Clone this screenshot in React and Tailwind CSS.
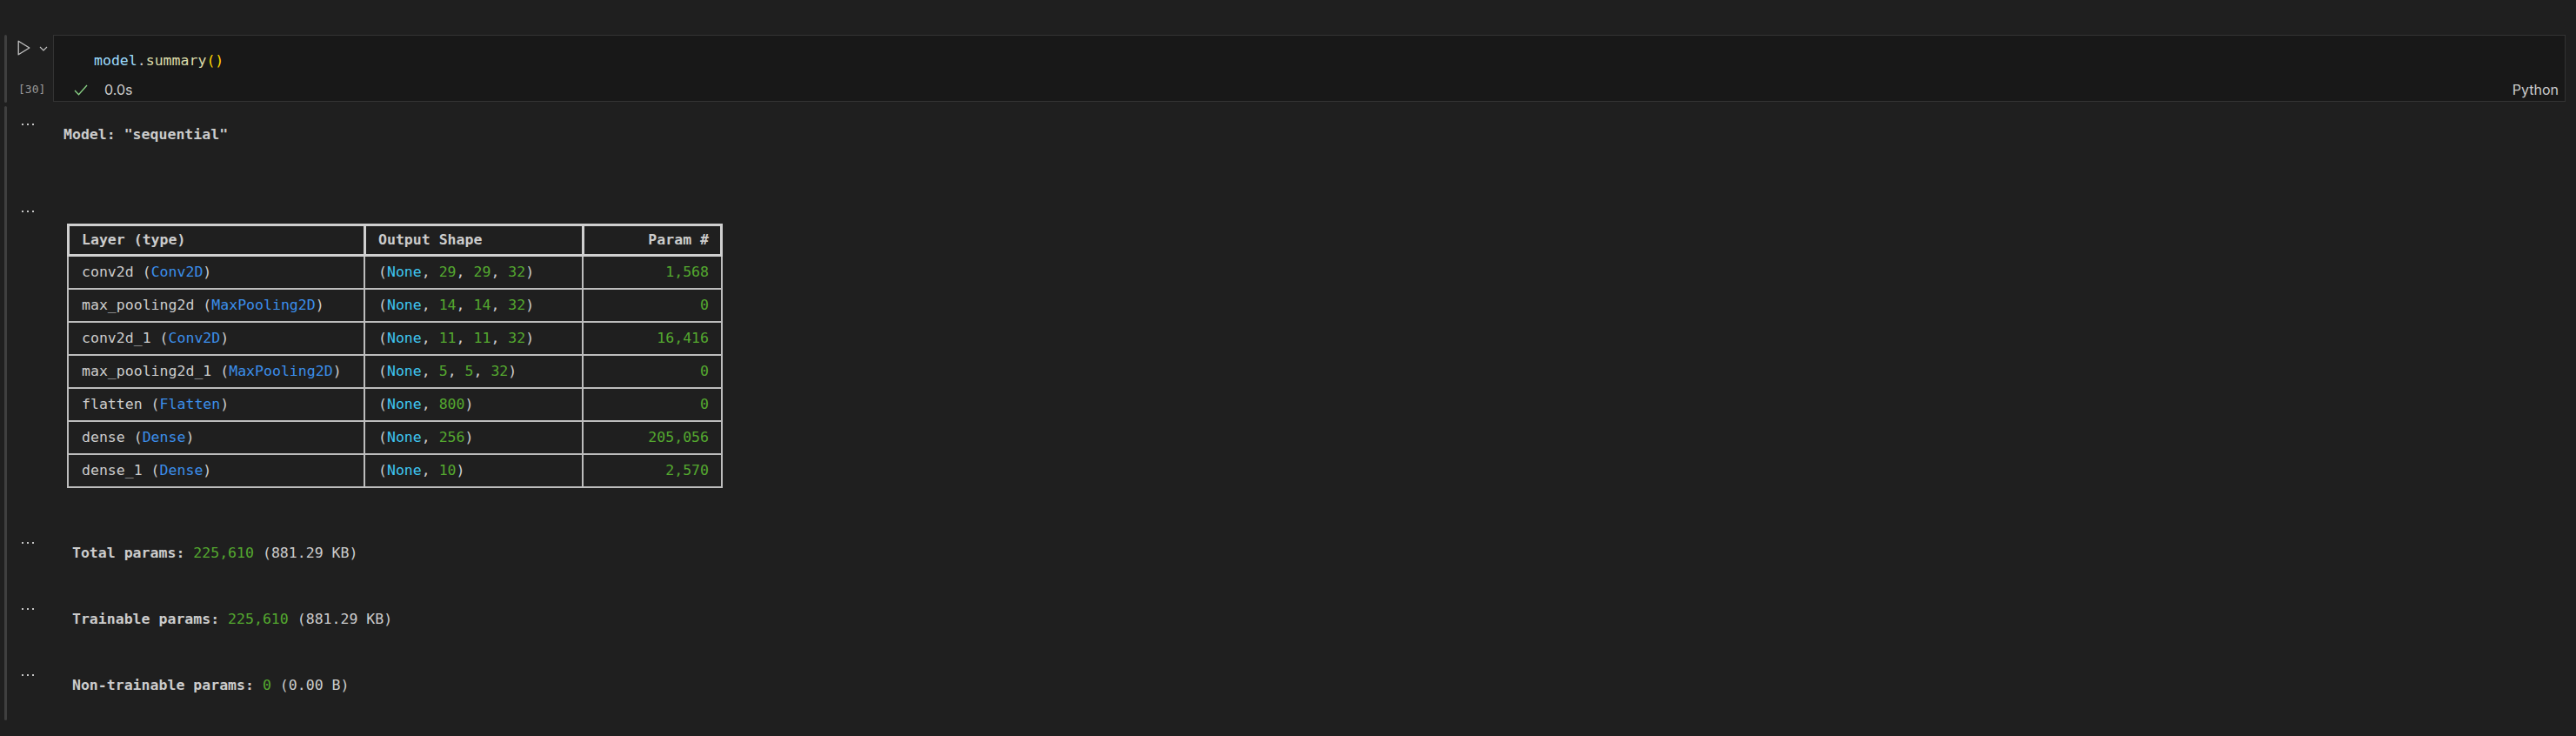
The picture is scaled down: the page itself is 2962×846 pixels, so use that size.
const mono = { fontFamily: '"DejaVu Sans Mono", "Liberation Mono", monospace' };

const layers = [
  { name: "conv2d", type: "Conv2D", shape: ["29", "29", "32"], params: "1,568" },
  { name: "max_pooling2d", type: "MaxPooling2D", shape: ["14", "14", "32"], params: "0" },
  { name: "conv2d_1", type: "Conv2D", shape: ["11", "11", "32"], params: "16,416" },
  { name: "max_pooling2d_1", type: "MaxPooling2D", shape: ["5", "5", "32"], params: "0" },
  { name: "flatten", type: "Flatten", shape: ["800"], params: "0" },
  { name: "dense", type: "Dense", shape: ["256"], params: "205,056" },
  { name: "dense_1", type: "Dense", shape: ["10"], params: "2,570" },
];

const Dots = () => (
  <svg width="16" height="4" viewBox="0 0 16 4" className="block">
    <rect x="1" y="1" width="2" height="2" fill="#c5c5c5" />
    <rect x="7" y="1" width="2" height="2" fill="#c5c5c5" />
    <rect x="13" y="1" width="2" height="2" fill="#c5c5c5" />
  </svg>
);

const OutputItem = ({ children, contentClass }) => (
  <div className="flex">
    <div className="w-[65px] shrink-0 pl-[16px] pt-[10px]">
      <Dots />
    </div>
    <div className={contentClass}>{children}</div>
  </div>
);

const Shape = ({ dims }) => (
  <span>
    (<span className="text-[#3ec5ef]">None</span>
    {dims.map((d, i) => (
      <span key={i}>
        , <span className="text-[#54a82f]">{d}</span>
      </span>
    ))}
    )
  </span>
);

const ParamLine = ({ label, value, size }) => (
  <div className="leading-[24px] whitespace-pre">
    <span className="font-bold"> {label}: </span>
    <span className="text-[#54a82f]">{value}</span>
    <span> ({size})</span>
  </div>
);

const App = () => {
  return (
    <div className="w-[2962px] h-[846px] bg-[#1f1f1f] pt-[40px] text-[#cccccc] overflow-hidden">
      {/* input cell */}
      <div className="flex h-[78px]">
        <div className="ml-[5px] w-[3px] bg-[#3f3f3f] rounded-full" />
        <div className="w-[53px] shrink-0 flex flex-col">
          <div className="flex items-start pt-[6px] pl-[12px]">
            <svg width="15" height="18" viewBox="0 0 15 18" className="block">
              <path d="M1.2 1.2 L13.8 9 L1.2 16.8 Z" fill="none" stroke="#c5c5c5" strokeWidth="1.3" strokeLinejoin="round" />
            </svg>
            <svg width="10" height="6" viewBox="0 0 10 6" className="block ml-[10px] mt-[7px]">
              <path d="M1 1 L5 5 L9 1" fill="none" stroke="#c5c5c5" strokeWidth="1.1" />
            </svg>
          </div>
          <div className="pl-[13px] mt-[31px] text-[13px] leading-[16px] text-[#9a9a9a]" style={mono}>
            [30]
          </div>
        </div>
        <div className="flex-1 mr-[12px] h-[77px] bg-[#181818] border border-[#333333] flex flex-col">
          <div className="pl-[46px] pt-[17px] text-[16.55px] leading-[24px]" style={mono}>
            <span className="text-[#9cdcfe]">model</span>
            <span className="text-[#cccccc]">.</span>
            <span className="text-[#dcdcaa]">summary</span>
            <span className="text-[#ffd700]">()</span>
          </div>
          <div className="flex items-center h-[24px] mt-[9px] pl-[23px] pr-[7px] font-['Inter',sans-serif] text-[16px]">
            <svg width="16" height="13" viewBox="0 0 16 13" className="block">
              <path d="M1 7 L5.5 11.8 L15 1" fill="none" stroke="#89d185" strokeWidth="1.3" />
            </svg>
            <span className="ml-[19px]">0.0s</span>
            <span className="ml-auto">Python</span>
          </div>
        </div>
      </div>

      {/* outputs */}
      <div className="flex mt-[4px] h-[706px]">
        <div className="ml-[5px] w-[3px] bg-[#3f3f3f] rounded-full" />
        <div className="flex flex-col pt-[9px] text-[16.55px]" style={mono}>
          <OutputItem contentClass="pt-[12px] pb-[64px] leading-[24px] font-bold whitespace-pre">
            Model: "sequential"
          </OutputItem>

          <OutputItem contentClass="pt-[26px] pb-[51px]">
            <div className="w-[754px] ml-[4px]">
              <div className="flex h-[38px] border-[3px] border-[#cfcfcf] font-bold">
                <div className="w-[341px] border-r-[3px] border-[#cfcfcf] pl-[14px] flex items-center">Layer (type)</div>
                <div className="w-[251px] border-r-[3px] border-[#cfcfcf] pl-[14px] flex items-center">Output Shape</div>
                <div className="flex-1 pr-[13px] flex items-center justify-end">Param #</div>
              </div>
              {layers.map((l) => (
                <div key={l.name} className="flex h-[38px] border-l-2 border-b-2 border-[#bdbdbd]">
                  <div className="w-[341px] border-r-2 border-[#bdbdbd] pl-[15px] flex items-center whitespace-pre">
                    {l.name} (<span className="text-[#3b8eea]">{l.type}</span>)
                  </div>
                  <div className="w-[251px] border-r-2 border-[#bdbdbd] pl-[15px] flex items-center whitespace-pre">
                    <Shape dims={l.shape} />
                  </div>
                  <div className="w-[160px] border-r-2 border-[#bdbdbd] pr-[14px] flex items-center justify-end text-[#54a82f]">
                    {l.params}
                  </div>
                </div>
              ))}
            </div>
          </OutputItem>

          <OutputItem contentClass="pt-[12px] pb-[40px]">
            <ParamLine label="Total params" value="225,610" size="881.29 KB" />
          </OutputItem>
          <OutputItem contentClass="pt-[12px] pb-[40px]">
            <ParamLine label="Trainable params" value="225,610" size="881.29 KB" />
          </OutputItem>
          <OutputItem contentClass="pt-[12px] pb-[27px]">
            <ParamLine label="Non-trainable params" value="0" size="0.00 B" />
          </OutputItem>
        </div>
      </div>
    </div>
  );
};

export default App;
